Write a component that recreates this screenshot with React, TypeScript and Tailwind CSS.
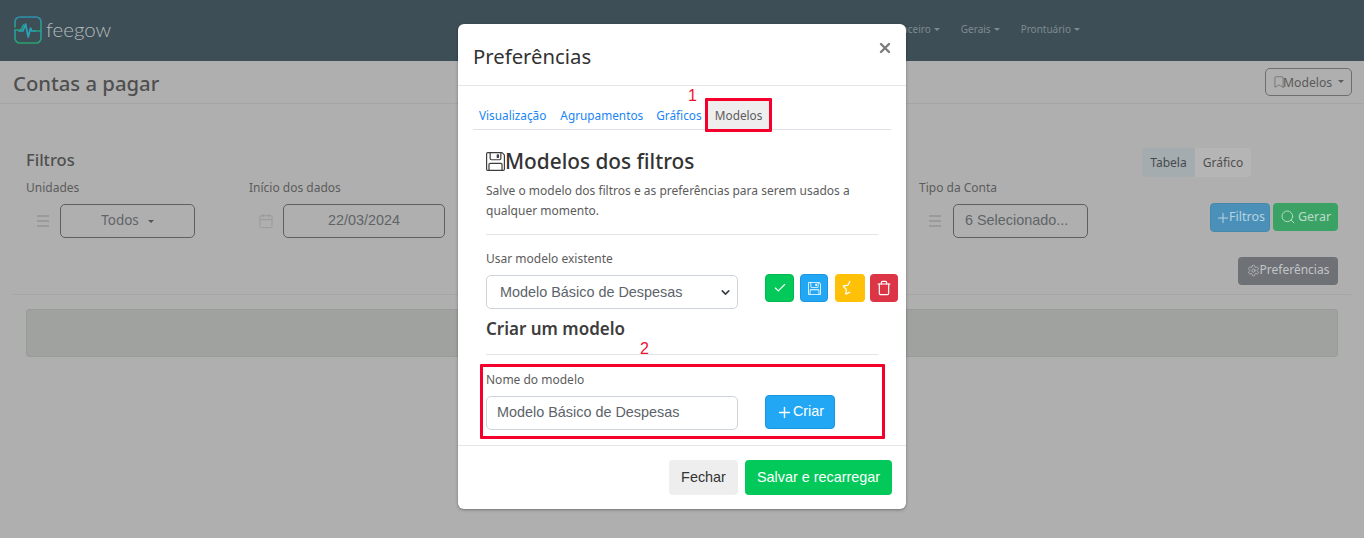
import { Calendar, Check, ChevronDown, Plus, Search, Settings, StarHalf, Trash, Bookmark, X } from "lucide-react";
import { BsFloppy } from "react-icons/bs";

function Caret({ className = "" }: { className?: string }) {
  return <span className={`inline-block w-0 h-0 border-x-[3.5px] border-x-transparent border-t-[3.5px] ${className}`} />;
}

function Bars() {
  return (
    <div className="w-[12px] flex flex-col gap-[3px]">
      <div className="h-[2px] bg-[#9a9a9a]" />
      <div className="h-[2px] bg-[#9a9a9a]" />
      <div className="h-[2px] bg-[#9a9a9a]" />
    </div>
  );
}

function Logo() {
  return (
    <svg width="28" height="28" viewBox="0 0 28 28" fill="none" className="shrink-0">
      <defs>
        <linearGradient id="lg" x1="0" y1="0" x2="0" y2="1">
          <stop offset="0" stopColor="#2f8fb0" />
          <stop offset="1" stopColor="#25a36f" />
        </linearGradient>
      </defs>
      <path d="M1 11V6a5 5 0 0 1 5-5h16a5 5 0 0 1 5 5v9h-6.5M1 14h6l2.5-5" stroke="url(#lg)" strokeWidth="1.7" strokeLinecap="round" strokeLinejoin="round" />
      <path d="M1 14v8a5 5 0 0 0 5 5h16a5 5 0 0 0 5-5v-7" stroke="url(#lg)" strokeWidth="1.7" strokeLinecap="round" />
      <path d="M5 15h4l2.6-7 2.6 13 2.4-9 1.2 3h3" stroke="#2aa3b8" strokeWidth="1.7" strokeLinecap="round" strokeLinejoin="round" />
    </svg>
  );
}

function Navbar() {
  return (
    <header className="h-[61px] bg-[#3d4e56] flex items-center pl-[14px] pr-[284px] shrink-0">
      <div className="flex items-center gap-[4px] -mt-[2px]">
        <Logo />
        <span className="font-['Lato',sans-serif] font-light text-[20.5px] leading-none text-[#b4babc]">feegow</span>
      </div>
      <nav className="ml-auto flex items-center gap-[21px] text-[10px] text-[#7d8a8f] -mt-[2px]">
        <span className="flex items-center gap-[3px]">Financeiro<Caret className="border-t-[#7d8a8f]" /></span>
        <span className="flex items-center gap-[3px]">Gerais<Caret className="border-t-[#7d8a8f]" /></span>
        <span className="flex items-center gap-[3px]">Prontuário<Caret className="border-t-[#7d8a8f]" /></span>
      </nav>
    </header>
  );
}

function TitleBar() {
  return (
    <div className="h-[43px] border-b border-[#a5a5a5] flex items-center justify-between pl-[13px] pr-[12px] shrink-0">
      <h1 className="text-[20.3px] leading-none font-medium text-[#4f4f4f] mt-[3px]">Contas a pagar</h1>
      <button className="h-[28px] w-[87px] border border-[#6e6e6e] rounded-[5px] flex items-center pl-[6px] text-[12.2px] text-[#5a5a5a]">
        <Bookmark size={14} strokeWidth={1.3} className="text-[#6a6a6a] shrink-0" />
        <span className="-ml-[3px] mt-[2px]">Modelos</span>
        <Caret className="ml-[6px] -mt-[2px] border-t-[#5a5a5a]" />
      </button>
    </div>
  );
}

function FieldBox({ width, children, center }: { width: string; children: React.ReactNode; center?: boolean }) {
  return (
    <div className={`${width} h-[34px] border border-[#5f5f5f] rounded-[5px] flex items-center font-['Liberation_Sans',sans-serif] text-[14.4px] text-[#5f6468] ${center ? "justify-center" : "pl-[11px]"}`}>
      {children}
    </div>
  );
}

function Filters() {
  return (
    <section className="h-[191px] shrink-0 border-b border-[#a5a5a5] mx-[13px] px-[13px] pt-[44px]">
      <div className="flex justify-between items-start h-[32px]">
        <h2 className="text-[16.5px] leading-[22px] font-medium text-[#4f4f4f] mt-[1px]">Filtros</h2>
        <div className="flex mr-[87px] text-[12px] h-[29px]">
          <span className="w-[53px] bg-[#a5acb0] rounded-l-[3px] flex items-center justify-center text-[#454a4e]">Tabela</span>
          <span className="w-[56px] bg-[#b5b5b5] rounded-r-[3px] flex items-center justify-center text-[#4f4f4f]">Gráfico</span>
        </div>
      </div>
      <div className="flex items-start text-[12px] text-[#5c5c5c]">
        <div className="w-[223px] shrink-0">
          <div className="leading-[16px]">Unidades</div>
          <div className="flex items-center mt-[8px] pl-[11px] gap-[11px]">
            <Bars />
            <FieldBox width="w-[135px]" center>
              <span className="font-['Noto_Sans',sans-serif] text-[13.5px] -mt-px">Todos</span>
              <Caret className="ml-[9px] border-t-[#555]" />
            </FieldBox>
          </div>
        </div>
        <div className="w-[670px] shrink-0">
          <div className="leading-[16px]">Início dos dados</div>
          <div className="flex items-center mt-[8px] pl-[9px] gap-[9px]">
            <Calendar size={16} strokeWidth={1.5} className="text-[#9a9a9a] shrink-0" />
            <FieldBox width="w-[162px]" center>22/03/2024</FieldBox>
          </div>
        </div>
        <div className="w-[291px] shrink-0">
          <div className="leading-[16px]">Tipo da Conta</div>
          <div className="flex items-center mt-[8px] pl-[10px] gap-[12px]">
            <Bars />
            <FieldBox width="w-[135px]"><span className="whitespace-nowrap">6 Selecionado...</span></FieldBox>
          </div>
        </div>
        <div className="flex-1 flex flex-col items-end">
          <div className="flex gap-[3px] mt-[23px]">
            <button className="w-[60px] h-[29px] rounded-[4px] bg-[#4a90b8] border border-[#4789ad] flex items-center justify-center text-[12.5px] text-[#b9d3e0]">
              <Plus size={16} strokeWidth={1.5} className="-mr-[2px] shrink-0" />Filtros
            </button>
            <button className="w-[65px] h-[28px] rounded-[4px] bg-[#3ba265] flex items-center justify-center gap-[2px] text-[12.5px] text-[#bcdcc9]">
              <Search size={16} strokeWidth={1.4} className="shrink-0" />Gerar
            </button>
          </div>
          <button className="w-[100px] h-[28px] mt-[25px] pb-[2px] rounded-[4px] bg-[#6e7176] flex items-center justify-center text-[12px] text-[#c4c5c7] whitespace-nowrap">
            <Settings size={13} strokeWidth={1.4} className="shrink-0" />Preferências
          </button>
        </div>
      </div>
    </section>
  );
}

function ActionBtn({ className, children }: { className: string; children: React.ReactNode }) {
  return <button className={`h-[28px] shrink-0 rounded-[4px] flex items-center justify-center text-white ${className}`}>{children}</button>;
}

function Modal() {
  return (
    <div className="absolute left-[458px] top-[24px] w-[448px] h-[485px] bg-white rounded-[6px] shadow-[0_1px_3px_rgba(0,0,0,0.35)] flex flex-col text-[#5c5c5c]">
      <div className="h-[62px] shrink-0 border-b border-[#e6e6e6] flex items-start justify-between pl-[15px] pr-[13px]">
        <h3 className="text-[20.3px] leading-[28px] mt-[18px] text-[#333]">Preferências</h3>
        <X size={16} strokeWidth={3.6} className="mt-[16px] text-[#7d7d7d]" />
      </div>
      <div className="mx-[15px] h-[44px] shrink-0 border-b border-[#dee2e6] flex items-end text-[11.8px]">
        <span className="ml-[6px] h-[28px] pt-[2px] flex items-center text-[#1a85f5]">Visualização</span>
        <span className="ml-[14px] h-[28px] pt-[2px] flex items-center text-[#1a85f5]">Agrupamentos</span>
        <span className="ml-[13px] h-[28px] pt-[2px] flex items-center text-[#1a85f5]">Gráficos</span>
        <span className="ml-[6px] w-[62px] h-[28px] pt-[2px] bg-[#eeeeee] flex items-center justify-center text-[#5c5c5c]">Modelos</span>
      </div>
      <div className="flex-1 px-[28px] pt-[18px] min-h-0">
        <div className="flex items-center h-[27px]">
          <BsFloppy size={19} className="text-[#3d3d3d] shrink-0" />
          <h4 className="text-[20.8px] leading-[27px] font-medium text-[#333]">Modelos dos filtros</h4>
        </div>
        <p className="text-[12px] leading-[20px] mt-[6px] w-[380px]">Salve o modelo dos filtros e as preferências para serem usados a qualquer momento.</p>
        <div className="h-px bg-[#e3e3e3] mt-[13px] w-[392px]" />
        <div className="text-[12px] leading-[16px] mt-[16px]">Usar modelo existente</div>
        <div className="flex items-start mt-[7px]">
          <div className="w-[252px] shrink-0 h-[34px] mt-px pt-px border border-[#ced4da] rounded-[5px] flex items-center justify-between pl-[13px] pr-[5px] font-['Liberation_Sans',sans-serif] text-[14.4px] text-[#5c636a]">
            Modelo Básico de Despesas
            <ChevronDown size={13} strokeWidth={3} className="text-[#3a3f44]" />
          </div>
          <ActionBtn className="w-[29px] ml-[27px] bg-[#02c95a] border border-[#02b951]"><Check size={14} strokeWidth={2} /></ActionBtn>
          <ActionBtn className="w-[28px] ml-[6px] bg-[#22a7f4] border border-[#1a96e0]"><BsFloppy size={13} /></ActionBtn>
          <ActionBtn className="w-[30px] ml-[7px] bg-[#ffc107]"><StarHalf size={16} strokeWidth={1.8} /></ActionBtn>
          <ActionBtn className="w-[28px] ml-[5px] bg-[#dc3545]"><Trash size={16} strokeWidth={1.8} /></ActionBtn>
        </div>
        <h5 className="text-[17px] leading-[24px] font-semibold text-[#3d3d3d] mt-[8px]">Criar um modelo</h5>
        <div className="h-px bg-[#e3e3e3] mt-[13px] w-[392px]" />
        <div className="text-[12px] leading-[16px] mt-[17px]">Nome do modelo</div>
        <div className="flex items-start mt-[7px]">
          <div className="w-[252px] shrink-0 h-[34px] mt-px border border-[#ced4da] rounded-[5px] flex items-center pl-[10px] font-['Liberation_Sans',sans-serif] text-[14.4px] text-[#5c636a]">
            Modelo Básico de Despesas
          </div>
          <button className="w-[70px] h-[34px] ml-[27px] bg-[#22a7f4] border border-[#1a96e0] rounded-[4px] flex items-center justify-center font-['Liberation_Sans',sans-serif] text-[14.4px] text-white">
            <Plus size={17} strokeWidth={2} />Criar
          </button>
        </div>
      </div>
      <div className="h-[64px] shrink-0 border-t border-[#e6e6e6] flex items-start justify-end gap-[7px] pt-[14px] pr-[14px] font-['Liberation_Sans',sans-serif] text-[14.4px]">
        <button className="w-[69px] h-[35px] bg-[#eeeeee] rounded-[4px] text-[#333]">Fechar</button>
        <button className="w-[147px] h-[35px] bg-[#02c95a] rounded-[4px] text-white">Salvar e recarregar</button>
      </div>
    </div>
  );
}

export default function App() {
  return (
    <div className="relative w-[1364px] h-[538px] overflow-hidden bg-[#afafaf] flex flex-col font-['Noto_Sans',sans-serif]">
      <Navbar />
      <TitleBar />
      <Filters />
      <div className="mx-[26px] mt-[14px] h-[48px] bg-[#a0a2a0] border border-[#999b99] rounded-[3px] shrink-0" />
      <Modal />
      <div className="absolute left-[705px] top-[98px] w-[67px] h-[34px] border-[3px] border-[#f5002d] rounded-[1px]" />
      <div className="absolute left-[480px] top-[364px] w-[405px] h-[75px] border-[3px] border-[#f5002d] rounded-[1px]" />
      <span className="absolute left-[688px] top-[87px] text-[16px] leading-[18px] text-[#f01030] font-['Liberation_Sans',sans-serif]">1</span>
      <span className="absolute left-[640px] top-[340px] text-[16px] leading-[18px] text-[#f01030] font-['Liberation_Sans',sans-serif]">2</span>
    </div>
  );
}
